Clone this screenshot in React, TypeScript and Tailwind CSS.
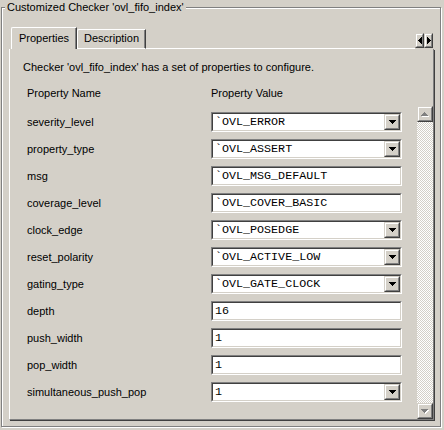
import React from "react";

const rows: [string, string, boolean][] = [
  ["severity_level", "`OVL_ERROR", true],
  ["property_type", "`OVL_ASSERT", true],
  ["msg", "`OVL_MSG_DEFAULT", false],
  ["coverage_level", "`OVL_COVER_BASIC", false],
  ["clock_edge", "`OVL_POSEDGE", true],
  ["reset_polarity", "`OVL_ACTIVE_LOW", true],
  ["gating_type", "`OVL_GATE_CLOCK", true],
  ["depth", "16", false],
  ["push_width", "1", false],
  ["pop_width", "1", false],
  ["simultaneous_push_pop", "1", true],
];

function Raised({ className, children }: { className: string; children?: React.ReactNode }) {
  return (
    <div
      className={`border border-t-[#d4d0c8] border-l-[#d4d0c8] border-b-[#404040] border-r-[#404040] ${className}`}
    >
      <div className="h-full w-full border border-t-white border-l-white border-b-[#808080] border-r-[#808080] bg-[#d4d0c8] flex items-center justify-center">
        {children}
      </div>
    </div>
  );
}

function DownBlack() {
  return (
    <svg width="7" height="4" viewBox="0 0 7 4" shapeRendering="crispEdges">
      <rect x="0" y="0" width="7" height="1" fill="#000" />
      <rect x="1" y="1" width="5" height="1" fill="#000" />
      <rect x="2" y="2" width="3" height="1" fill="#000" />
      <rect x="3" y="3" width="1" height="1" fill="#000" />
    </svg>
  );
}

function Tri({ dir }: { dir: "up" | "down" }) {
  const ys = dir === "up" ? [0, 1, 2, 3] : [3, 2, 1, 0];
  const draw = (dx: number, dy: number, c: string) =>
    ys.map((y, i) => (
      <rect key={c + i} x={3 - i + dx} y={y + dy} width={2 * i + 1} height="1" fill={c} />
    ));
  return (
    <svg width="8" height="5" viewBox="0 0 8 5" shapeRendering="crispEdges">
      {draw(1, 1, "#ffffff")}
      {draw(0, 0, "#808080")}
    </svg>
  );
}

function SideTri({ dir }: { dir: "left" | "right" }) {
  const xs = dir === "left" ? [0, 1, 2, 3] : [3, 2, 1, 0];
  return (
    <svg width="4" height="7" viewBox="0 0 4 7" shapeRendering="crispEdges">
      {xs.map((x, i) => (
        <rect key={i} x={x} y={3 - i} width="1" height={2 * i + 1} fill="#000" />
      ))}
    </svg>
  );
}

function Field({ value, combo }: { value: string; combo: boolean }) {
  return (
    <div className="w-[191px] h-[20px] border border-t-[#808080] border-l-[#808080] border-b-white border-r-white">
      <div className="h-full flex items-center border border-t-[#404040] border-l-[#404040] border-b-[#d4d0c8] border-r-[#d4d0c8] bg-white">
        <span className="flex-1 pl-[2px] font-['Liberation_Mono',monospace] text-[11.7px] leading-[16px] text-black whitespace-pre">
          {value}
        </span>
        {combo && (
          <Raised className="w-[16px] h-full">
            <DownBlack />
          </Raised>
        )}
      </div>
    </div>
  );
}

export default function App() {
  return (
    <div className="w-[444px] h-[430px] bg-[#d4d0c8] pt-[7px] pl-[1px] overflow-hidden font-['Liberation_Sans',Arial,sans-serif] text-[11px] text-black">
      <div className="relative w-[440px] h-[420px] border border-[#808080] shadow-[inset_1px_1px_0_#ffffff,1px_1px_0_#ffffff] pt-[19px] pl-[7px]">
        <span className="absolute left-[3px] top-[-8px] px-[2px] bg-[#d4d0c8] leading-[14px] whitespace-nowrap">
          Customized Checker 'ovl_fifo_index'
        </span>

        <div className="w-[426px]">
          {/* tab bar */}
          <div className="flex h-[22px] items-end">
            <div className="w-[2px] h-full" />
            <div className="relative z-10 w-[66px] h-[22px] border-t border-l border-white rounded-tl-[2px] border-r border-r-[#404040] shadow-[inset_-1px_0_0_#808080] pt-[3px] text-center leading-[14px]">
              Properties
            </div>
            <div className="w-[69px] h-[20px] border-t border-l border-white rounded-tl-[2px] border-r border-r-[#404040] border-b border-b-white shadow-[inset_-1px_0_0_#808080] pt-[1px] text-center leading-[14px]">
              Description
            </div>
            <div className="flex-1 h-px bg-white" />
            <div className="self-start mt-[6px] flex">
              <Raised className="w-[9px] h-[15px]">
                <SideTri dir="left" />
              </Raised>
              <Raised className="w-[9px] h-[15px]">
                <SideTri dir="right" />
              </Raised>
            </div>
            <div className="w-[2px] h-full" />
          </div>

          {/* panel */}
          <div className="w-[425px] h-[371px] border-l border-l-white border-r border-r-[#808080] border-b border-b-[#808080] shadow-[1px_1px_0_#404040] flex flex-col">
            <div className="pl-[13px] mt-[11px] leading-[14px] whitespace-nowrap">
              Checker 'ovl_fifo_index' has a set of properties to configure.
            </div>
            <div className="flex mt-[12px] leading-[14px]">
              <div className="w-[201px] pl-[17px]">Property Name</div>
              <div>Property Value</div>
            </div>
            <div className="mt-[6px] h-[313px] flex">
              <div className="flex-1 pt-[6px]">
                {rows.map(([name, value, combo]) => (
                  <div key={name} className="flex items-center h-[20px] mb-[7px]">
                    <div className="w-[201px] pl-[17px] leading-[14px] whitespace-nowrap">{name}</div>
                    <Field value={value} combo={combo} />
                  </div>
                ))}
              </div>
              <div className="w-[16px] h-full flex flex-col">
                <Raised className="w-[16px] h-[16px]">
                  <Tri dir="up" />
                </Raised>
                <div className="flex-1 bg-[image:repeating-conic-gradient(#d4d0c8_0_25%,#ffffff_0_50%)] bg-[length:2px_2px]" />
                <Raised className="w-[16px] h-[16px]">
                  <Tri dir="down" />
                </Raised>
              </div>
            </div>
          </div>
        </div>
      </div>
    </div>
  );
}
